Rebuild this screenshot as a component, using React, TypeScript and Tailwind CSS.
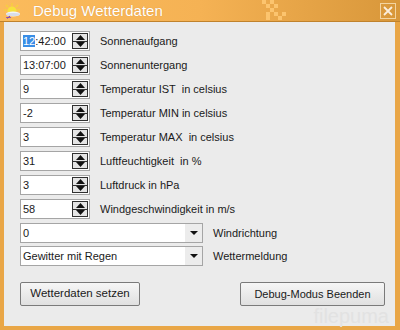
import React from "react";

const spinRows = [
  { value: "12:42:00", label: "Sonnenaufgang", selected: true },
  { value: "13:07:00", label: "Sonnenuntergang" },
  { value: "9", label: "Temperatur IST  in celsius" },
  { value: "-2", label: "Temperatur MIN in celsius" },
  { value: "3", label: "Temperatur MAX  in celsius" },
  { value: "31", label: "Luftfeuchtigkeit  in %" },
  { value: "3", label: "Luftdruck in hPa" },
  { value: "58", label: "Windgeschwindigkeit in m/s" },
];

const comboRows = [
  { value: "0", label: "Windrichtung" },
  { value: "Gewitter mit Regen", label: "Wettermeldung" },
];

const SpinButton = () => (
  <div className="w-[16px] h-[16px] border border-[#303030] bg-[#e4e4e4] flex flex-col">
    <div className="flex-1 flex items-center justify-center border-b border-[#303030]">
      <svg width="9" height="5" viewBox="0 0 9 5">
        <polygon points="4.5,0 9,5 0,5" fill="#111" />
      </svg>
    </div>
    <div className="flex-1 flex items-center justify-center">
      <svg width="9" height="5" viewBox="0 0 9 5">
        <polygon points="0,0 9,0 4.5,5" fill="#111" />
      </svg>
    </div>
  </div>
);

const TitleIcon = () => (
  <svg width="17" height="16" viewBox="0 0 17 16">
    <g stroke="#f6d23a" strokeWidth="1.2">
      <line x1="8" y1="0" x2="8" y2="3" />
      <line x1="2" y1="2" x2="4" y2="4" />
      <line x1="14" y1="2" x2="12" y2="4" />
      <line x1="0" y1="7" x2="3" y2="7" />
      <line x1="13" y1="7" x2="16" y2="7" />
    </g>
    <circle cx="8" cy="8" r="4.5" fill="#f7e23c" />
    <ellipse cx="9" cy="11" rx="7" ry="2.6" fill="#f2f4f8" />
    <ellipse cx="9" cy="11.5" rx="7" ry="1.6" fill="#d8dde8" />
    <line x1="2" y1="14.5" x2="7" y2="14.5" stroke="#9a58b8" strokeWidth="1" />
    <line x1="3" y1="15.5" x2="6" y2="13" stroke="#7a48a8" strokeWidth="1" />
  </svg>
);

const Checker = () => (
  <svg width="30" height="21" viewBox="0 0 30 21" className="absolute left-[262px] top-0">
    <g fill="#fcc46e">
      <rect x="0" y="0" width="4" height="4" />
      <rect x="8" y="0" width="4" height="4" />
      <rect x="4" y="4" width="4" height="4" />
      <rect x="12" y="4" width="4" height="4" />
      <rect x="8" y="8" width="4" height="4" />
      <rect x="4" y="12" width="4" height="4" />
      <rect x="12" y="12" width="4" height="4" />
      <rect x="20" y="12" width="4" height="4" />
      <rect x="4" y="16" width="4" height="4" />
      <rect x="16" y="16" width="4" height="4" />
    </g>
  </svg>
);

export default function App() {
  return (
    <div
      className="w-[400px] h-[330px] bg-[#e9a646] flex flex-col overflow-hidden"
      style={{ fontFamily: '"Liberation Sans", Arial, sans-serif' }}
    >
      <div className="relative h-[22px] flex items-center bg-gradient-to-r from-[#fbbb5c] via-[#f5b254] to-[#d8973a] border-b border-[#c0822c]">
        <Checker />
        <div className="ml-[4px] mt-[1px]">
          <TitleIcon />
        </div>
        <span className="ml-[12px] text-[15px] text-white leading-none [text-shadow:0_0_1px_rgba(160,90,20,0.4)]">
          Debug Wetterdaten
        </span>
        <div className="ml-auto mr-[4px] w-[16px] h-[16px] border border-[#f3d4a0] flex items-center justify-center">
          <svg width="10" height="10" viewBox="0 0 10 10">
            <path d="M1 1 L9 9 M9 1 L1 9" stroke="#fbeedd" strokeWidth="1.8" />
          </svg>
        </div>
      </div>

      <div className="relative flex-1 ml-[4px] mr-[5px] mb-[4px] bg-[#ebebeb] pt-[9px] pl-[16px] text-[11px] text-[#1a1a1a]">
        <div className="flex flex-col gap-[4px]">
          {spinRows.map((row) => (
            <div key={row.label} className="flex items-center h-[20px]">
              <div className="w-[70px] h-[20px] bg-white border border-[#a5a5a5] flex items-center pl-[2px] pr-[1px]">
                <span className="flex-1 leading-none whitespace-nowrap">
                  {row.selected ? (
                    <>
                      <span className="bg-[#3a8ee6] text-white">12</span>:42:00
                    </>
                  ) : (
                    row.value
                  )}
                </span>
                <SpinButton />
              </div>
              <span className="ml-[10px] whitespace-pre">{row.label}</span>
            </div>
          ))}
        </div>

        <div className="flex flex-col gap-[3px] mt-[4px]">
          {comboRows.map((row) => (
            <div key={row.label} className="flex items-center h-[20px]">
              <div className="w-[183px] h-[20px] bg-white border border-[#a5a5a5] flex items-center pl-[2px]">
                <span className="flex-1 leading-none">{row.value}</span>
                <div className="w-[17px] h-[18px] bg-[#ececec] flex items-center justify-center">
                  <svg width="8" height="4" viewBox="0 0 8 4">
                    <polygon points="0,0 8,0 4,4" fill="#111" />
                  </svg>
                </div>
              </div>
              <span className="ml-[10px]">{row.label}</span>
            </div>
          ))}
        </div>

        <div className="flex mt-[16px] pr-[10px]">
          <button className="w-[120px] h-[24px] border border-[#7a7a7a] rounded-[2px] bg-gradient-to-b from-[#f6f6f6] to-[#e0e0e0] text-[11.5px]">
            Wetterdaten setzen
          </button>
          <button className="ml-auto w-[145px] h-[24px] border border-[#7a7a7a] rounded-[2px] bg-gradient-to-b from-[#f6f6f6] to-[#e0e0e0] text-[11px]">
            Debug-Modus Beenden
          </button>
        </div>

        <span className="absolute right-[6px] bottom-[0px] text-[20px] text-[#e2e2e2] leading-none">
          filepuma
        </span>
      </div>
    </div>
  );
}
